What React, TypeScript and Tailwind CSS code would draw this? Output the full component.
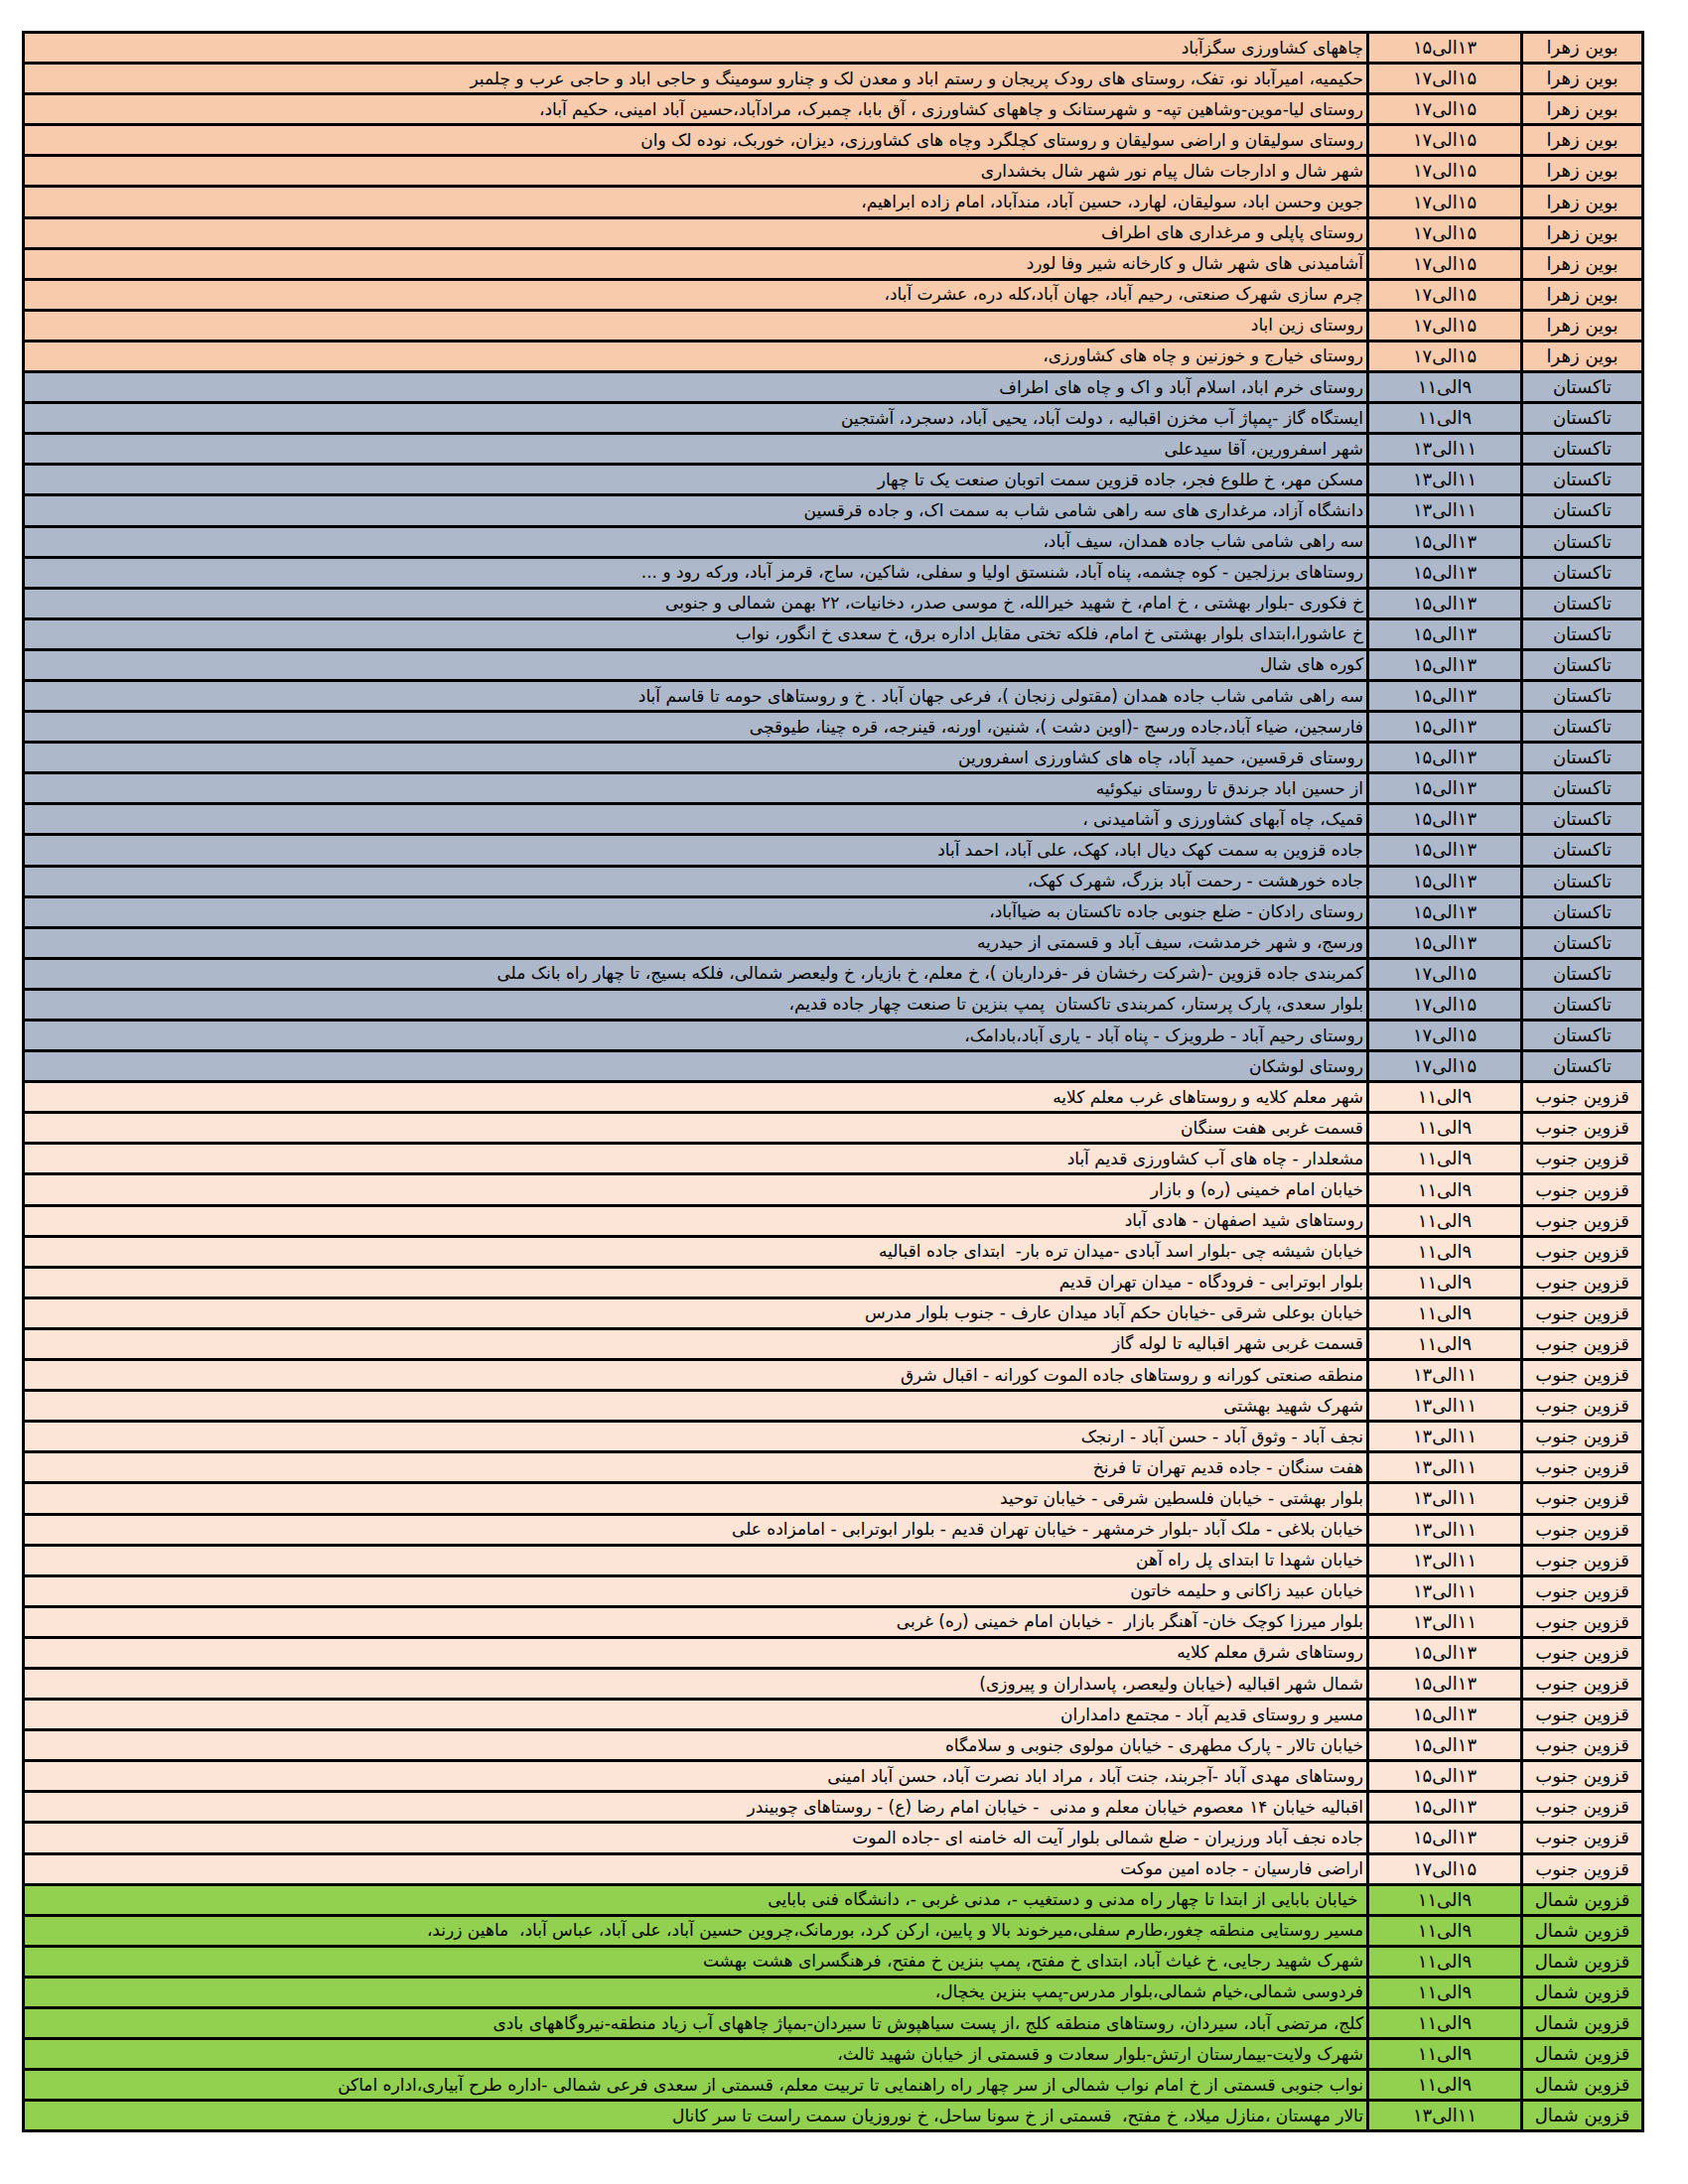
import React from "react";

type Row = [string, string, string];

const rowBg: Record<string, string> = {
  "بوین زهرا": "bg-[#f8cbad]",
  "تاکستان": "bg-[#adb9ca]",
  "قزوین جنوب": "bg-[#fce4d6]",
  "قزوین شمال": "bg-[#92d050]",
};

const B = "بوین زهرا";
const T = "تاکستان";
const J = "قزوین جنوب";
const S = "قزوین شمال";

const rows: Row[] = [
  [B, "۱۳الی۱۵", "چاههای کشاورزی سگزآباد"],
  [B, "۱۵الی۱۷", "حکیمیه، امیرآباد نو، تفک، روستای های رودک پریجان و رستم اباد و معدن لک و چنارو سومینگ و حاجی اباد و حاجی عرب و چلمبر"],
  [B, "۱۵الی۱۷", "روستای لیا-موین-وشاهین تپه- و شهرستانک و چاههای کشاورزی ، آق بابا، چمبرک، مرادآباد،حسین آباد امینی، حکیم آباد،"],
  [B, "۱۵الی۱۷", "روستای سولیقان و اراضی سولیقان و روستای کچلگرد وچاه های کشاورزی، دیزان، خوربک، نوده لک وان"],
  [B, "۱۵الی۱۷", "شهر شال و ادارجات شال پیام نور شهر شال بخشداری"],
  [B, "۱۵الی۱۷", "جوین وحسن اباد، سولیقان، لهارد، حسین آباد، مندآباد، امام زاده ابراهیم،"],
  [B, "۱۵الی۱۷", "روستای پاپلی و مرغداری های اطراف"],
  [B, "۱۵الی۱۷", "آشامیدنی های شهر شال و کارخانه شیر وفا لورد"],
  [B, "۱۵الی۱۷", "چرم سازی شهرک صنعتی، رحیم آباد، جهان آباد،کله دره، عشرت آباد،"],
  [B, "۱۵الی۱۷", "روستای زین اباد"],
  [B, "۱۵الی۱۷", "روستای خیارج و خوزنین و چاه های کشاورزی،"],
  [T, "۹الی۱۱", "روستای خرم اباد، اسلام آباد و اک و چاه های اطراف"],
  [T, "۹الی۱۱", "ایستگاه گاز -پمپاژ آب مخزن اقبالیه ، دولت آباد، یحیی آباد، دسجرد، آشتجین"],
  [T, "۱۱الی۱۳", "شهر اسفرورین، آقا سیدعلی"],
  [T, "۱۱الی۱۳", "مسکن مهر، خ طلوع فجر، جاده قزوین سمت اتوبان صنعت یک تا چهار"],
  [T, "۱۱الی۱۳", "دانشگاه آزاد، مرغداری های سه راهی شامی شاب به سمت اک، و جاده قرقسین"],
  [T, "۱۳الی۱۵", "سه راهی شامی شاب جاده همدان، سیف آباد،"],
  [T, "۱۳الی۱۵", "روستاهای برزلجین - کوه چشمه، پناه آباد، شنستق اولیا و سفلی، شاکین، ساج، قرمز آباد، ورکه رود و ..."],
  [T, "۱۳الی۱۵", "خ فکوری -بلوار بهشتی ، خ امام، خ شهید خیرالله، خ موسی صدر، دخانیات، ۲۲ بهمن شمالی و جنوبی"],
  [T, "۱۳الی۱۵", "خ عاشورا،ابتدای بلوار بهشتی خ امام، فلکه تختی مقابل اداره برق، خ سعدی خ انگور، نواب"],
  [T, "۱۳الی۱۵", "کوره های شال"],
  [T, "۱۳الی۱۵", "سه راهی شامی شاب جاده همدان (مقتولی زنجان )، فرعی جهان آباد . خ و روستاهای حومه تا قاسم آباد"],
  [T, "۱۳الی۱۵", "فارسجین، ضیاء آباد،جاده ورسج -(اوین دشت )، شنین، اورنه، قینرجه، قره چینا، طیوقچی"],
  [T, "۱۳الی۱۵", "روستای قرقسین، حمید آباد، چاه های کشاورزی اسفرورین"],
  [T, "۱۳الی۱۵", "از حسین اباد جرندق تا روستای نیکوئیه"],
  [T, "۱۳الی۱۵", "قمیک، چاه آبهای کشاورزی و آشامیدنی ،"],
  [T, "۱۳الی۱۵", "جاده قزوین به سمت کهک دیال اباد، کهک، علی آباد، احمد آباد"],
  [T, "۱۳الی۱۵", "جاده خورهشت - رحمت آباد بزرگ، شهرک کهک،"],
  [T, "۱۳الی۱۵", "روستای رادکان - ضلع جنوبی جاده تاکستان به ضیاآباد،"],
  [T, "۱۳الی۱۵", "ورسج، و شهر خرمدشت، سیف آباد و قسمتی از حیدریه"],
  [T, "۱۵الی۱۷", "کمربندی جاده قزوین -(شرکت رخشان فر -فرداربان )، خ معلم، خ بازیار، خ ولیعصر شمالی، فلکه بسیج، تا چهار راه بانک ملی"],
  [T, "۱۵الی۱۷", "بلوار سعدی، پارک پرستار، کمربندی تاکستان  پمپ بنزین تا صنعت چهار جاده قدیم،"],
  [T, "۱۵الی۱۷", "روستای رحیم آباد - طرویزک - پناه آباد - یاری آباد،بادامک،"],
  [T, "۱۵الی۱۷", "روستای لوشکان"],
  [J, "۹الی۱۱", "شهر معلم کلایه و روستاهای غرب معلم کلایه"],
  [J, "۹الی۱۱", "قسمت غربی هفت سنگان"],
  [J, "۹الی۱۱", "مشعلدار - چاه های آب کشاورزی قدیم آباد"],
  [J, "۹الی۱۱", "خیابان امام خمینی (ره) و بازار"],
  [J, "۹الی۱۱", "روستاهای شید اصفهان - هادی آباد"],
  [J, "۹الی۱۱", "خیابان شیشه چی -بلوار اسد آبادی -میدان تره بار-  ابتدای جاده اقبالیه"],
  [J, "۹الی۱۱", "بلوار ابوترابی - فرودگاه - میدان تهران قدیم"],
  [J, "۹الی۱۱", "خیابان بوعلی شرقی -خیابان حکم آباد میدان عارف - جنوب بلوار مدرس"],
  [J, "۹الی۱۱", "قسمت غربی شهر اقبالیه تا لوله گاز"],
  [J, "۱۱الی۱۳", "منطقه صنعتی کورانه و روستاهای جاده الموت کورانه - اقبال شرق"],
  [J, "۱۱الی۱۳", "شهرک شهید بهشتی"],
  [J, "۱۱الی۱۳", "نجف آباد - وثوق آباد - حسن آباد - ارنجک"],
  [J, "۱۱الی۱۳", "هفت سنگان - جاده قدیم تهران تا فرنخ"],
  [J, "۱۱الی۱۳", "بلوار بهشتی - خیابان فلسطین شرقی - خیابان توحید"],
  [J, "۱۱الی۱۳", "خیابان بلاغی - ملک آباد -بلوار خرمشهر - خیابان تهران قدیم - بلوار ابوترابی - امامزاده علی"],
  [J, "۱۱الی۱۳", "خیابان شهدا تا ابتدای پل راه آهن"],
  [J, "۱۱الی۱۳", "خیابان عبید زاکانی و حلیمه خاتون"],
  [J, "۱۱الی۱۳", "بلوار میرزا کوچک خان- آهنگر بازار  - خیابان امام خمینی (ره) غربی"],
  [J, "۱۳الی۱۵", "روستاهای شرق معلم کلایه"],
  [J, "۱۳الی۱۵", "شمال شهر اقبالیه (خیابان ولیعصر، پاسداران و پیروزی)"],
  [J, "۱۳الی۱۵", "مسیر و روستای قدیم آباد - مجتمع دامداران"],
  [J, "۱۳الی۱۵", "خیابان تالار - پارک مطهری - خیابان مولوی جنوبی و سلامگاه"],
  [J, "۱۳الی۱۵", "روستاهای مهدی آباد -آجربند، جنت آباد ، مراد اباد نصرت آباد، حسن آباد امینی"],
  [J, "۱۳الی۱۵", "اقبالیه خیابان ۱۴ معصوم خیابان معلم و مدنی  - خیابان امام رضا (ع) - روستاهای چوبیندر"],
  [J, "۱۳الی۱۵", "جاده نجف آباد ورزیران - ضلع شمالی بلوار آیت اله خامنه ای -جاده الموت"],
  [J, "۱۵الی۱۷", "اراضی فارسیان - جاده امین موکت"],
  [S, "۹الی۱۱", " خیابان بابایی از ابتدا تا چهار راه مدنی و دستغیب -، مدنی غربی -، دانشگاه فنی بابایی"],
  [S, "۹الی۱۱", "مسیر روستایی منطقه چغور،طارم سفلی،میرخوند بالا و پایین، ارکن کرد، بورمانک،چروین حسین آباد، علی آباد، عباس آباد،  ماهین زرند،"],
  [S, "۹الی۱۱", "شهرک شهید رجایی، خ غیاث آباد، ابتدای خ مفتح، پمپ بنزین خ مفتح، فرهنگسرای هشت بهشت"],
  [S, "۹الی۱۱", "فردوسی شمالی،خیام شمالی،بلوار مدرس-پمپ بنزین یخچال،"],
  [S, "۹الی۱۱", "کلج، مرتضی آباد، سیردان، روستاهای منطقه کلج ،از پست سیاهپوش تا سیردان-بمپاژ چاههای آب زیاد منطقه-نیروگاههای بادی"],
  [S, "۹الی۱۱", "شهرک ولایت-بیمارستان ارتش-بلوار سعادت و قسمتی از خیابان شهید ثالث،"],
  [S, "۹الی۱۱", "نواب جنوبی قسمتی از خ امام نواب شمالی از سر چهار راه راهنمایی تا تربیت معلم، قسمتی از سعدی فرعی شمالی -اداره طرح آبیاری،اداره اماکن"],
  [S, "۱۱الی۱۳", "تالار مهستان ،منازل میلاد، خ مفتح،  قسمتی از خ سونا ساحل، خ نوروزیان سمت راست تا سر کانال"],
];

export default function App() {
  return (
    <div className="min-h-[2200px] w-[1700px] bg-white pt-[31px] pl-[22px]">
      {/* schedule table, right-to-left like the sheet */}
      <div
        dir="rtl"
        className="w-[1634px] border-[3px] border-b-0 border-black text-black text-[17px] leading-none font-['DejaVu_Sans',sans-serif]"
      >
        {rows.map(([region, time, desc], i) => (
          <div
            key={i}
            className={`flex h-[31.1px] border-b-[3px] border-black ${rowBg[region]}`}
          >
            <div className="flex w-[119px] shrink-0 items-center justify-center whitespace-nowrap text-[18px]">
              {region}
            </div>
            <div className="flex w-[155px] shrink-0 items-center justify-center border-r-[3px] border-black whitespace-nowrap text-[18px]">
              {time}
            </div>
            <div className="flex min-w-0 flex-1 items-center overflow-hidden border-r-[3px] border-black pr-[3px] whitespace-pre">
              {desc}
            </div>
          </div>
        ))}
      </div>
    </div>
  );
}
